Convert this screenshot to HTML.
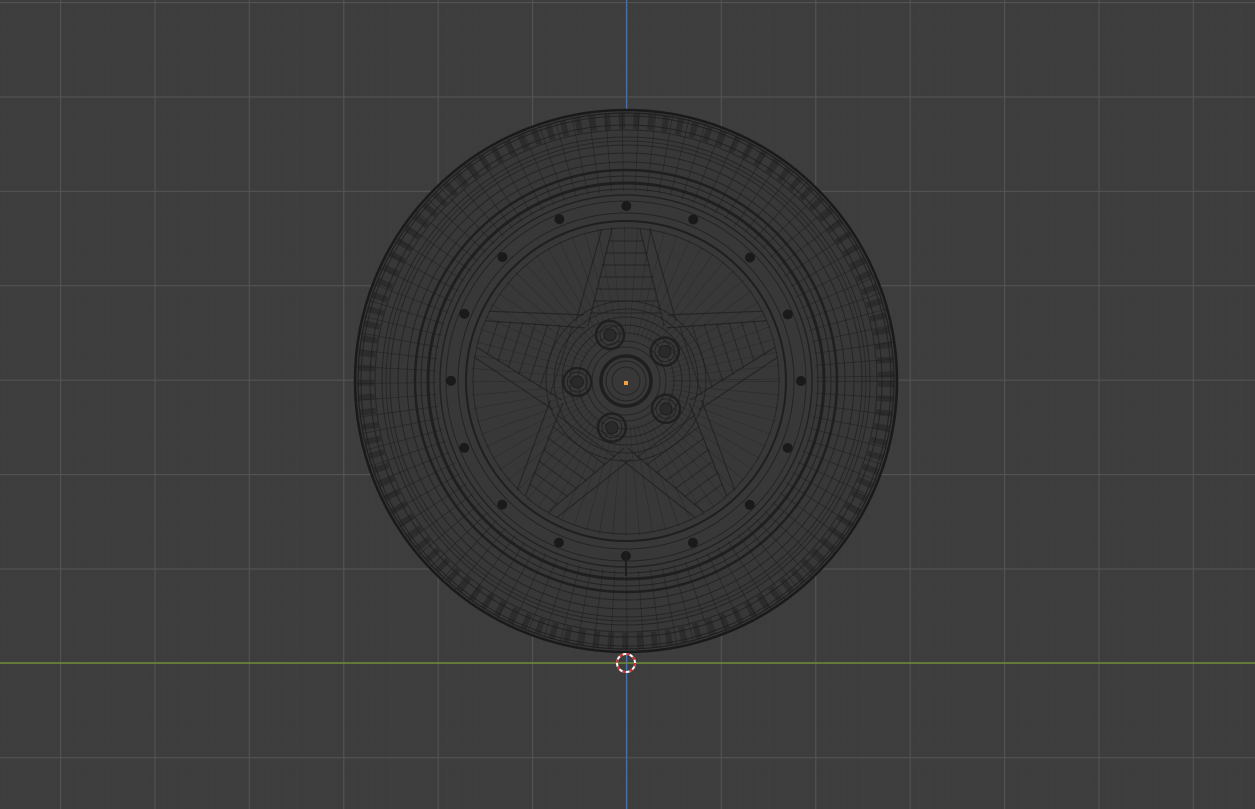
<!DOCTYPE html>
<html><head><meta charset="utf-8"><style>
html,body{margin:0;padding:0;background:#3d3d3d;overflow:hidden}
svg{display:block}
</style></head><body>
<svg width="1255" height="809" viewBox="0 0 1255 809" xmlns="http://www.w3.org/2000/svg">
<defs>
<pattern id="minor" x="60" y="2" width="9.44" height="9.44" patternUnits="userSpaceOnUse">
<path d="M0 0V9.44M0 0H9.44" stroke="#404040" stroke-width="1" fill="none"/>
</pattern>
<pattern id="major" x="60" y="2" width="94.4" height="94.4" patternUnits="userSpaceOnUse">
<path d="M0.5 0V94.4M0 0.5H94.4" stroke="#535353" stroke-width="1.2" fill="none"/>
</pattern>
</defs>
<rect width="1255" height="809" fill="#3d3d3d"/>
<rect width="1255" height="809" fill="url(#minor)"/>
<rect width="1255" height="809" fill="url(#major)"/>
<line x1="626.5" y1="0" x2="626.5" y2="809" stroke="#4a6fa8" stroke-width="1.2"/>
<line x1="0" y1="663" x2="1255" y2="663" stroke="#6e8a3a" stroke-width="1.5"/>

<g transform="translate(626,381)" fill="none" stroke="#1e1e1e">
<circle r="271" fill="#383838" stroke="#1a1a1a" stroke-width="2.5"/>
<circle r="230" stroke-width="80" stroke-opacity="0.6" stroke-dasharray="0.8 13.6"/>
<circle r="260" stroke-width="16" stroke-opacity="0.45" stroke-dasharray="6 8.5"/>
<circle r="268" stroke-width="1.2" stroke-opacity="0.9"/>
<circle r="265" stroke-width="1" stroke-opacity="0.8"/>
<circle r="256" stroke-width="1" stroke-opacity="0.8"/>
<circle r="251" stroke-width="1" stroke-opacity="0.7"/>
<circle r="244" stroke-width="1" stroke-opacity="0.7"/>
<circle r="240" stroke-width="1" stroke-opacity="0.6"/>
<circle r="236" stroke-width="1" stroke-opacity="0.7"/>
<circle r="228" stroke-width="1" stroke-opacity="0.7"/>
<circle r="219" stroke-width="1" stroke-opacity="0.7"/>
<circle r="211" stroke-width="2.5" stroke-opacity="0.95"/>
<circle r="205" stroke-width="1" stroke-opacity="0.8"/>
<circle r="198" stroke-width="3" stroke-opacity="0.95"/>
<circle r="192" stroke-width="1" stroke-opacity="0.8"/>
<circle r="186" stroke-width="1.5" stroke-opacity="0.85"/>
<circle r="180" stroke-width="1" stroke-opacity="0.7"/>
<circle r="175" stroke="#1a1a1a" stroke-width="10" stroke-linecap="round" stroke-dasharray="0 68.72"/>
<circle r="168" stroke-width="1" stroke-opacity="0.8"/>
<circle r="160" stroke-width="2" stroke-opacity="0.95"/>
<circle r="153" stroke-width="1" stroke-opacity="0.7"/>
<circle r="100" stroke-width="110" stroke-opacity="0.45" stroke-dasharray="0.6 8.1"/>
<g stroke-opacity="0.7" stroke-width="1.2">
<g id="sp">
<path d="M-14 -152 L-38 -55 M14 -152 L38 -55 M-24 -152 L-50 -60 M24 -152 L50 -60"/>
<path d="M-18 -140 L18 -140 M-21 -128 L21 -128 M-24 -116 L24 -116 M-27 -104 L27 -104 M-30 -92 L30 -92 M-33 -80 L33 -80 M-36 -68 L36 -68" stroke-opacity="0.55"/>
</g>
<use href="#sp" transform="rotate(72)"/>
<use href="#sp" transform="rotate(144)"/>
<use href="#sp" transform="rotate(216)"/>
<use href="#sp" transform="rotate(288)"/>
</g>
<circle r="80" stroke-width="1" stroke-opacity="0.7"/>
<circle r="72" stroke-width="1" stroke-opacity="0.7"/>
<circle r="64" stroke-width="1" stroke-opacity="0.7"/>
<circle r="56" stroke-width="1" stroke-opacity="0.7"/>
<circle r="48" stroke-width="1" stroke-opacity="0.6"/>
<circle r="40" stroke-width="1" stroke-opacity="0.7"/>
<circle r="34" stroke-width="1" stroke-opacity="0.7"/>
<circle r="25" stroke-width="3.5" stroke-opacity="0.95"/>
<circle r="20" stroke-width="1" stroke-opacity="0.8"/>
<circle r="14" stroke-width="1" stroke-opacity="0.7"/>
<g id="lug" transform="translate(-16,-46)">
<circle r="14" stroke-width="2.5" stroke-opacity="0.9"/>
<circle r="10" stroke-width="1" stroke-opacity="0.8"/>
<circle r="6" fill="#2a2a2a" stroke-width="1"/>
</g>
<use href="#lug" transform="rotate(72)"/>
<use href="#lug" transform="rotate(144)"/>
<use href="#lug" transform="rotate(216)"/>
<use href="#lug" transform="rotate(288)"/>
<path d="M0 170 V195" stroke-width="2"/>
</g>
<rect x="624" y="381" width="4" height="4" fill="#f0a040"/>
<circle cx="626" cy="663" r="9" fill="none" stroke="#ffffff" stroke-width="2"/>
<circle cx="626" cy="663" r="9" fill="none" stroke="#d23030" stroke-width="2" stroke-dasharray="3.5 3.57"/>
</svg>
</body></html>
